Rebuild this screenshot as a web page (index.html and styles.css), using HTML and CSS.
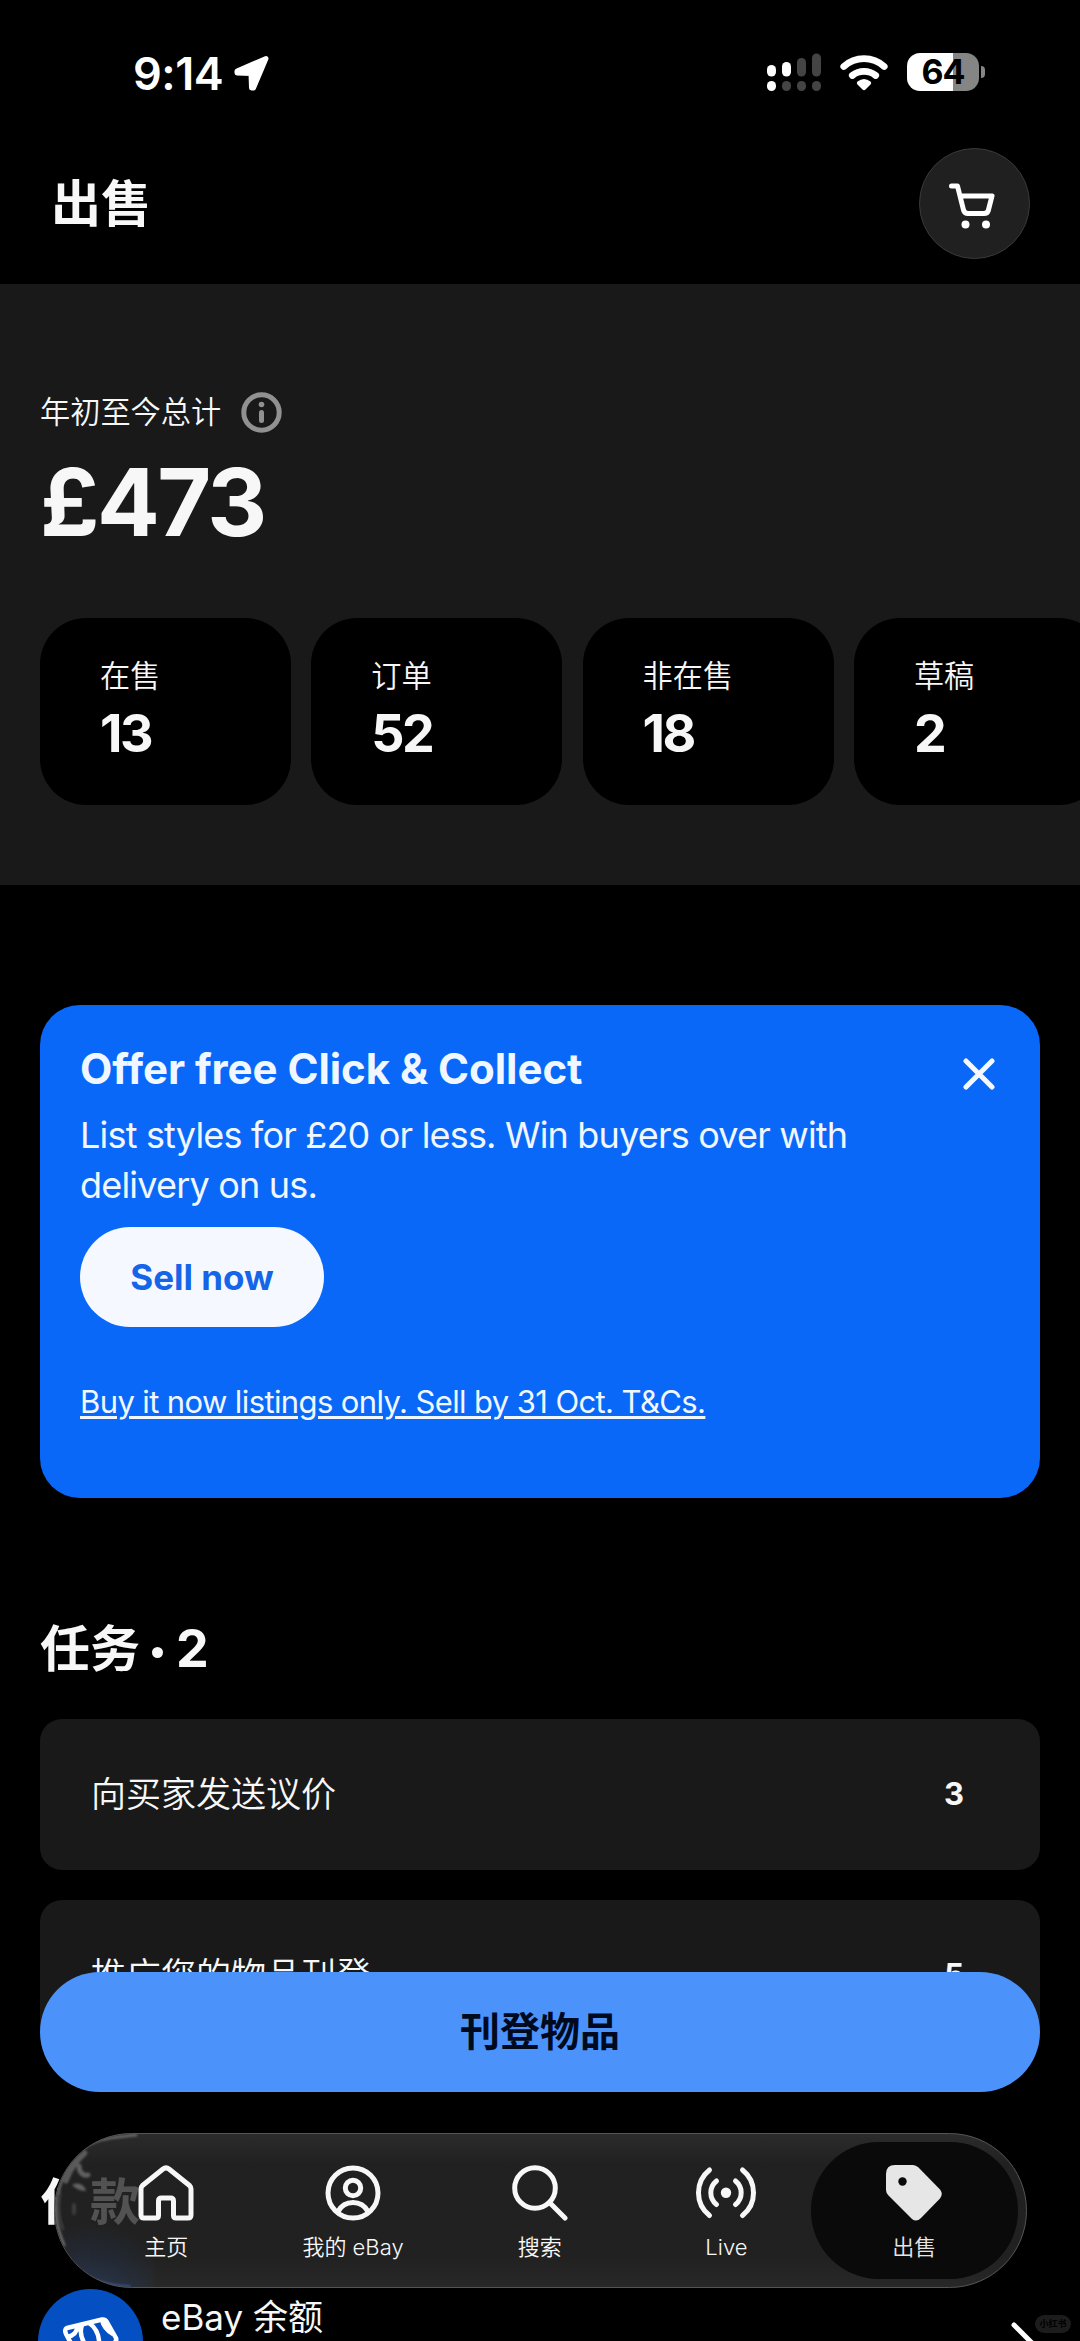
FILE: index.html
```html
<!DOCTYPE html>
<html lang="zh-CN">
<head>
<meta charset="utf-8">
<title>出售</title>
<link rel="stylesheet" href="styles.css">
</head>
<body>
<div class="screen">
  <div class="status">
    <div class="status-left">
      <span class="time">9:14</span>
      <svg class="loc" width="36" height="37" viewBox="0 0 36 37"><path d="M32 3.500 L19.500 33 L17.500 33 L17 18.500 L3 18 L3 16 Z" fill="#fff" stroke="#fff" stroke-width="5" stroke-linejoin="round"/></svg>
    </div>
    <div class="status-right">
      <svg width="55" height="38" viewBox="0 0 55 38">
        <g fill="#fff"><rect x="0" y="12" width="9" height="11.500" rx="4.500"/><rect x="15" y="9" width="9" height="14.500" rx="4.500"/><rect x="0" y="28" width="9" height="10" rx="4.500"/></g>
        <g fill="#444"><rect x="30" y="5" width="9" height="18.500" rx="4.500"/><rect x="45" y="0.500" width="9" height="23" rx="4.500"/><rect x="15" y="28" width="9" height="10" rx="4.500"/><rect x="30" y="28" width="9" height="10" rx="4.500"/><rect x="45" y="28" width="9" height="10" rx="4.500"/></g>
      </svg>
      <svg class="wifi" width="48" height="38" viewBox="0 0 48 38">
        <g fill="none" stroke="#fff" stroke-linecap="round"><path d="M3.800 13.500 A30 30 0 0 1 44.200 13.500" stroke-width="6.800"/><path d="M12.300 22.500 A19 19 0 0 1 35.700 22.500" stroke-width="6.800"/></g>
        <path d="M17.500 28.500 Q24 23.500 30.500 28.500 Q32 30 30.500 31.500 L25.500 36.500 Q24 37.800 22.500 36.500 L17.500 31.500 Q16 30 17.500 28.500Z" fill="#fff"/>
      </svg>
      <div class="battery">64</div>
      <div class="nub"></div>
    </div>
  </div>
  <header class="header">
    <h1>出售</h1>
    <div class="cart">
      <svg width="48" height="48" viewBox="0 0 48 48"><g fill="none" stroke="#fff" stroke-width="5" stroke-linecap="round" stroke-linejoin="round"><path d="M3.500 4 H9.500 L15.500 28 Q16.500 31.500 20 31.500 H36 Q39.500 31.500 40.300 28.500 L44 14 H12.500"/></g><circle cx="17.500" cy="42.500" r="4" fill="#fff"/><circle cx="38" cy="42.500" r="4" fill="#fff"/></svg>
    </div>
  </header>
  <section class="summary">
    <div class="ytd"><span>年初至今总计</span>
      <svg width="41" height="41" viewBox="0 0 41 41"><circle cx="20.500" cy="20.500" r="17.700" fill="none" stroke="#919191" stroke-width="5"/><circle cx="20.500" cy="12.500" r="2.800" fill="#919191"/><path d="M20.500 20.500V28.500" stroke="#919191" stroke-width="5" stroke-linecap="round"/></svg>
    </div>
    <div class="amount">£473</div>
    <div class="stats">
      <div class="stat"><span>在售</span><b>13</b></div>
      <div class="stat"><span>订单</span><b>52</b></div>
      <div class="stat"><span>非在售</span><b>18</b></div>
      <div class="stat"><span>草稿</span><b>2</b></div>
    </div>
  </section>
  <section class="banner">
    <div class="banner-text">
      <h2>Offer free Click &amp; Collect</h2>
      <p>List styles for £20 or less. Win buyers over with<br>delivery on us.</p>
      <div class="sell">Sell now</div>
      <a class="terms">Buy it now listings only. Sell by 31 Oct. T&amp;Cs.</a>
    </div>
    <svg class="close" width="32" height="32" viewBox="0 0 32 32"><path d="M3 3L29 29M29 3L3 29" stroke="#f5f9ff" stroke-width="5" stroke-linecap="round"/></svg>
  </section>
  <section class="tasks">
    <h2>任务<i></i><b>2</b></h2>
    <div class="task"><span>向买家发送议价</span><b>3</b></div>
    <div class="task"><span>推广您的物品刊登</span><b>5</b></div>
  </section>
  <section class="pay">
    <h2>付款</h2>
    <div class="balance">
      <div class="coin"><svg width="56" height="56" viewBox="0 0 56 56"><g fill="none" stroke="#fff" stroke-width="4.500" stroke-linejoin="round"><path d="M4 12 L39 3.500 Q42 3 43.500 5.500 L53 22 Q54 25 51 27 L17 44 L3 18 Q1 13 4 12Z"/><path d="M19 9 Q14 22 30 38 M26 7 Q38 15 36 34 M4 21 Q14 19 14 11 M39 4 Q41 13 50 18"/></g></svg></div>
      <span>eBay 余额</span>
      <svg class="chev" width="26" height="46" viewBox="0 0 26 46"><path d="M3 3L23 23L3 43" fill="none" stroke="#fff" stroke-width="5" stroke-linecap="round"/></svg>
    </div>
  </section>

  <div class="list-item">刊登物品</div>
  <nav class="tabs">
    <svg class="lens" width="100" height="155" viewBox="0 0 100 155">
      <defs>
        <filter id="soft"><feGaussianBlur stdDeviation="0.9"/></filter>
        <linearGradient id="glass" x1="0" y1="0" x2="0" y2="1"><stop offset="0" stop-color="#2b2b2b"/><stop offset=".2" stop-color="#212121"/><stop offset=".75" stop-color="#212122"/><stop offset="1" stop-color="#28292b"/></linearGradient>
        <radialGradient id="tint" gradientUnits="userSpaceOnUse" cx="40" cy="165" r="75"><stop offset="0" stop-color="#2a4c88" stop-opacity=".4"/><stop offset="1" stop-color="#2a4c88" stop-opacity="0"/></radialGradient>
      </defs>
      <rect width="36.500" height="155" fill="url(#glass)"/>
      <rect width="100" height="155" fill="url(#tint)"/>
      <g filter="url(#soft)" fill="none" stroke-linecap="round">
        <path d="M4 60 C8 42 16 28 28 17 S52 5 82 2" stroke="#646464" stroke-width="3"/>
        <path d="M12 48 C17 34 23 28 31 20" stroke="#5c5c5c" stroke-width="5"/>
        <path d="M25 33 C25 41 31 43 34 42" stroke="#5e5e5e" stroke-width="5"/>
        <path d="M18 52 C24 48 31 52 32 58 C26 58 21 55 18 52Z" fill="#626262"/>
        <path d="M20 72V80" stroke="#3c3c3c" stroke-width="4"/>
        <path d="M2 62 C0 84 4 98 10 112" stroke="#6a6a6a" stroke-width="3"/>
        <path d="M6 58 C4 78 5 86 9 96" stroke="#464646" stroke-width="2"/>
        <path d="M22 133 C36 147 50 152 76 153.500" stroke="#3f62a6" stroke-width="1.500"/>
      </g>
    </svg>
    <div class="tab">
      <svg width="56" height="56" viewBox="0 0 56 56"><path d="M3 24 Q3 22 4.500 20.500 L25 4 Q28 1.800 31 4 L51.500 20.500 Q53 22 53 24 V50 Q53 53 50 53 H38 Q35.500 53 35.500 50.500 V36 Q35.500 33 32.500 33 H23.500 Q20.500 33 20.500 36 V50.500 Q20.500 53 18 53 H6 Q3 53 3 50 Z" fill="none" stroke="#f7f7f7" stroke-width="5" stroke-linejoin="round"/></svg>
      <span>主页</span></div>
    <div class="tab">
      <svg width="56" height="56" viewBox="0 0 56 56"><g fill="none" stroke="#f7f7f7" stroke-width="5"><circle cx="28" cy="28" r="25"/><circle cx="28" cy="23" r="7.700"/><path d="M13 46.500 Q18 37.500 28 37.500 Q38 37.500 43 46.500"/></g></svg>
      <span>我的 eBay</span></div>
    <div class="tab">
      <svg width="56" height="56" viewBox="0 0 56 56"><g fill="none" stroke="#f7f7f7" stroke-width="5" stroke-linecap="round"><circle cx="23" cy="23" r="20.300"/><path d="M38 38L53 53"/></g></svg>
      <span>搜索</span></div>
    <div class="tab">
      <svg width="62" height="56" viewBox="0 0 62 56"><g fill="none" stroke="#f7f7f7" stroke-width="5" stroke-linecap="round"><path d="M14.500 5 A29 29 0 0 0 14.500 50.500 M21.500 16 A15 15 0 0 0 21.500 39.500 M40.500 16 A15 15 0 0 1 40.500 39.500 M47.500 5 A29 29 0 0 1 47.500 50.500"/></g><circle cx="31" cy="27.800" r="5.200" fill="#f7f7f7"/></svg>
      <span>Live</span></div>
    <div class="tab active">
      <svg width="56" height="56" viewBox="0 0 56 56"><path d="M9 0 H27 Q30 0 32.500 2.500 L54 24.500 Q57.500 29 54 33.500 L35 53 Q30.500 57.500 26 54 L2.500 30.500 Q0 28 0 25 V9 Q0 0 9 0Z" fill="#e6e6e6"/><circle cx="16.500" cy="16.500" r="4.200" fill="#0a0a0a"/></svg>
      <span>出售</span></div>
  </nav>
  <div class="mark">小红书</div>
</div>
</body>
</html>
```
FILE: styles.css
```css
* { box-sizing: border-box; }
body { margin: 0; background: #000; color: #f7f7f7; font-family: "Inter", "Noto Sans CJK SC", sans-serif; }
svg { display: block; flex: none; }
h1, h2, p { margin: 0; }
.screen { position: relative; width: 1080px; height: 2341px; overflow: hidden; background: #000; }

.status { height: 148px; padding: 53px 95px 0 133px; display: flex; justify-content: space-between; align-items: flex-start; color: #fff; }
.status-left { display: flex; gap: 11px; }
.time { font-size: 45px; font-weight: 600; line-height: 42px; letter-spacing: -0.500px; width: 90px; white-space: nowrap; }
.loc { margin-top: 2px; }
.status-right { display: flex; }
.wifi { margin: 0 19px 0 18px; }
.battery { width: 72px; height: 38px; border-radius: 13px; background: linear-gradient(90deg, #fff 64%, #858585 64%); color: #000; font-size: 34px; font-weight: 700; line-height: 38px; text-align: center; letter-spacing: -1px; }
.nub { width: 4px; height: 12px; margin: 13px 0 0 2px; border-radius: 0 5px 5px 0; background: #858585; }

.header { height: 136px; padding: 0 50px 0 51px; display: flex; justify-content: space-between; }
h1 { font-size: 50px; font-weight: 700; line-height: 112px; }
.cart { width: 111px; height: 111px; padding: 4px 5px 0 0; border-radius: 50%; background: #202020; border: 1.500px solid #3a3a3a; display: grid; place-items: center; }

.summary { height: 601px; padding: 108px 0 0 40px; background: #191919; overflow: hidden; }
.ytd { display: flex; align-items: center; height: 40px; gap: 20px; font-size: 30.200px; line-height: 40px; font-weight: 350; }
.amount { margin-top: 20px; font-size: 93px; line-height: 100px; font-weight: 700; letter-spacing: -2.500px; }
.stats { display: flex; gap: 20.300px; margin-top: 66px; }
.stat { flex: none; width: 251px; height: 187px; padding: 38px 0 0 60px; border-radius: 46px; background: #000; display: flex; flex-direction: column; gap: 8px; }
.stat span { font-size: 30.200px; line-height: 40px; font-weight: 350; }
.stat b { font-size: 52px; line-height: 60px; font-weight: 700; letter-spacing: -2.500px; }

.banner { margin: 120px 40px 0; height: 493px; padding: 39px 45px 0 41px; border-radius: 40px; background: #0a68f9; color: #f0f7ff; display: flex; justify-content: space-between; }
.banner h2 { font-size: 42px; line-height: 50px; font-weight: 700; letter-spacing: -0.050px; white-space: nowrap; margin-left: -1px; }
.banner p { margin: 17px 0 0 -1px; font-size: 36px; line-height: 49.500px; white-space: nowrap; letter-spacing: -0.810px; }
.sell { margin: 17px 0 0 -1px; width: 244px; height: 100px; border-radius: 50px; background: #f5f9ff; color: #1465e8; font-size: 35px; font-weight: 700; line-height: 100px; text-align: center; }
.terms { display: block; margin: 55px 0 0 -1px; font-size: 31px; line-height: 40px; text-decoration: underline; text-decoration-thickness: 2.500px; text-underline-offset: 3px; white-space: nowrap; letter-spacing: -0.610px; }
.close { margin-top: 14px; }

.tasks { margin: 121px 40px 0; }
.tasks h2 { display: flex; align-items: center; font-size: 50px; line-height: 60px; font-weight: 700; margin-bottom: 40px; }
.tasks h2 b { font-size: 52px; font-weight: 700; }
.tasks i { width: 11px; height: 11px; border-radius: 50%; background: #f7f7f7; margin: 7px 13px 0 12px; }
.task { height: 150.500px; margin-bottom: 30.500px; padding: 0 76px 0 51px; border-radius: 22px; background: #191919; display: flex; justify-content: space-between; align-items: center; font-size: 35px; line-height: 50px; font-weight: 350; }
.task b { font-size: 31px; font-weight: 700; }

.pay { margin: 121px 40px 0 40px; }
.pay h2 { font-size: 50px; line-height: 60px; font-weight: 700; }
.balance { display: flex; margin: 57px 3px 0 -2px; }
.coin { width: 105px; height: 105px; flex: none; border-radius: 50%; background: #044fc2; padding: 27px 0 0 25px; }
.balance span { margin-left: 18px; font-size: 35px; line-height: 50px; margin-top: 3px; flex: 1; }
.chev { margin-top: 33px; }

.list-item { position: absolute; left: 40px; top: 1972px; width: 1000px; height: 120px; border-radius: 60px; background: #4b93fb; color: #000a1f; font-size: 40px; font-weight: 700; line-height: 120px; text-align: center; }
.tabs { position: absolute; left: 54px; top: 2133px; width: 973px; height: 155px; padding: 8px 8px 8px 18px; border-radius: 78px; border: 1.500px solid #555; background: linear-gradient(180deg, rgba(54,54,54,.8), rgba(41,41,41,.8) 20%, rgba(41,41,41,.8) 80%, rgba(50,50,50,.8)); display: flex; overflow: hidden; }
.lens { position: absolute; left: -1px; top: -1px; }
.tab { position: relative; width: 186.700px; flex: none; display: flex; flex-direction: column; align-items: center; padding-top: 23px; font-size: 22px; line-height: 30px; font-weight: 350; }
.tab span { margin-top: 11px; white-space: nowrap; }
.active { width: 207px; margin-left: -9px; border-radius: 68px; background: #0a0a0a; color: #e6e6e6; }
.mark { position: absolute; left: 1035px; top: 2315px; width: 36px; height: 18px; border-radius: 9px; background: #1c1c1c; color: #000; font-size: 9px; font-weight: 700; line-height: 18px; text-align: center; }
```
